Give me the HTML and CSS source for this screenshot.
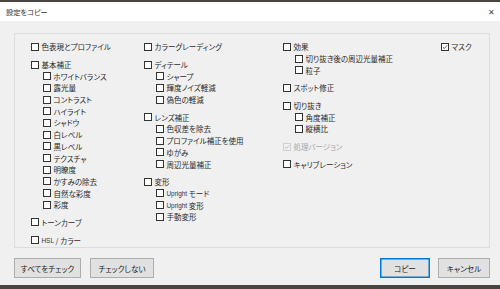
FILE: index.html
```html
<!DOCTYPE html>
<html lang="ja">
<head>
    <meta charset="UTF-8">
    <title>設定をコピー</title>
    <link rel="stylesheet" href="styles.css">
</head>
<body>
    <div class="dialog">
        <div class="titlebar">
            <span class="title">設定をコピー</span>
            <span class="close">&#x2715;</span>
        </div>

        <div class="content">
            <div class="group">
                <!-- Column 1 -->
                <div class="col col1">
                    <div class="set">
                        <label class="item"><span class="box"></span>色表現とプロファイル</label>
                    </div>
                    <div class="set">
                        <label class="item"><span class="box"></span>基本補正</label>
                        <label class="item sub"><span class="box"></span>ホワイトバランス</label>
                        <label class="item sub"><span class="box"></span>露光量</label>
                        <label class="item sub"><span class="box"></span>コントラスト</label>
                        <label class="item sub"><span class="box"></span>ハイライト</label>
                        <label class="item sub"><span class="box"></span>シャドウ</label>
                        <label class="item sub"><span class="box"></span>白レベル</label>
                        <label class="item sub"><span class="box"></span>黒レベル</label>
                        <label class="item sub"><span class="box"></span>テクスチャ</label>
                        <label class="item sub"><span class="box"></span>明瞭度</label>
                        <label class="item sub"><span class="box"></span>かすみの除去</label>
                        <label class="item sub"><span class="box"></span>自然な彩度</label>
                        <label class="item sub"><span class="box"></span>彩度</label>
                    </div>
                    <div class="set">
                        <label class="item"><span class="box"></span>トーンカーブ</label>
                    </div>
                    <div class="set">
                        <label class="item"><span class="box"></span><span class="latin">HSL</span>&nbsp;/ カラー</label>
                    </div>
                </div>

                <!-- Column 2 -->
                <div class="col col2">
                    <div class="set">
                        <label class="item"><span class="box"></span>カラーグレーディング</label>
                    </div>
                    <div class="set">
                        <label class="item"><span class="box"></span>ディテール</label>
                        <label class="item sub"><span class="box"></span>シャープ</label>
                        <label class="item sub"><span class="box"></span>輝度ノイズ軽減</label>
                        <label class="item sub"><span class="box"></span>偽色の軽減</label>
                    </div>
                    <div class="set">
                        <label class="item"><span class="box"></span>レンズ補正</label>
                        <label class="item sub"><span class="box"></span>色収差を除去</label>
                        <label class="item sub"><span class="box"></span>プロファイル補正を使用</label>
                        <label class="item sub"><span class="box"></span>ゆがみ</label>
                        <label class="item sub"><span class="box"></span>周辺光量補正</label>
                    </div>
                    <div class="set">
                        <label class="item"><span class="box"></span>変形</label>
                        <label class="item sub"><span class="box"></span><span class="latin">Upright</span>&nbsp;モード</label>
                        <label class="item sub"><span class="box"></span><span class="latin">Upright</span>&nbsp;変形</label>
                        <label class="item sub"><span class="box"></span>手動変形</label>
                    </div>
                </div>

                <!-- Column 3 -->
                <div class="col col3">
                    <div class="set">
                        <label class="item"><span class="box"></span>効果</label>
                        <label class="item sub"><span class="box"></span>切り抜き後の周辺光量補正</label>
                        <label class="item sub"><span class="box"></span>粒子</label>
                    </div>
                    <div class="set">
                        <label class="item"><span class="box"></span>スポット修正</label>
                    </div>
                    <div class="set">
                        <label class="item"><span class="box"></span>切り抜き</label>
                        <label class="item sub"><span class="box"></span>角度補正</label>
                        <label class="item sub"><span class="box"></span>縦横比</label>
                    </div>
                    <div class="set">
                        <label class="item disabled"><span class="box checked"><svg viewBox="0 0 7 7"><path d="M1 3.6 L2.8 5.3 L6 1.6" /></svg></span>処理バージョン</label>
                    </div>
                    <div class="set">
                        <label class="item"><span class="box"></span>キャリブレーション</label>
                    </div>
                </div>

                <!-- Column 4 -->
                <div class="col col4">
                    <div class="set">
                        <label class="item"><span class="box checked"><svg viewBox="0 0 7 7"><path d="M1 3.6 L2.8 5.3 L6 1.6" /></svg></span>マスク</label>
                    </div>
                </div>
            </div>

            <div class="buttons">
                <div class="left">
                    <span class="btn btn-wide">すべてをチェック</span>
                    <span class="btn">チェックしない</span>
                </div>
                <div class="right">
                    <span class="btn btn-default">コピー</span>
                    <span class="btn btn-small">キャンセル</span>
                </div>
            </div>
        </div>
    </div>
</body>
</html>
```

FILE: styles.css
```css
body {
    margin: 0;
    padding: 0;
    width: 500px;
    height: 289px;
    overflow: hidden;
    background: #4a4541;
    font-family: "Noto Sans CJK JP", "Noto Sans", sans-serif;
    font-feature-settings: "palt";
    color: #2a2a2a;
}

.dialog {
    margin-top: 2px;
    height: 283px;
    background: #f0f0f0;
}

/* Title bar */
.titlebar {
    height: 19px;
    background: #fff;
    display: flex;
    align-items: center;
    justify-content: space-between;
    padding: 0 6px;
    font-size: 7.2px;
    color: #333;
}

.close {
    font-size: 8px;
    color: #444;
    margin-right: -1px;
}

.content {
    padding: 12px 10px 0 14px;
}

/* Settings group */
.group {
    height: 206px;
    width: 458px;
    border: 1px solid #dcdcdc;
    padding: 7px 0 0 16px;
    display: flex;
    box-sizing: content-box;
}

.col {
    display: flex;
    flex-direction: column;
}

.col1 { width: 113px; }
.col2 { width: 139px; }
.col3 { width: 158px; }
.col4 { flex: 1; }

.set {
    display: flex;
    flex-direction: column;
}

.set + .set {
    margin-top: 6px;
}

.item {
    height: 11.7px;
    display: flex;
    align-items: center;
    font-size: 7.5px;
    white-space: nowrap;
}

.item.sub {
    padding-left: 12px;
}

.latin {
    font-family: "Liberation Sans", sans-serif;
    font-size: 6.4px;
    color: #2a3550;
}

.box {
    width: 6px;
    height: 6px;
    border: 1px solid #333;
    background: #fff;
    margin-right: 2.5px;
    flex-shrink: 0;
    display: flex;
}

.box svg {
    width: 6px;
    height: 6px;
}

.box svg path {
    fill: none;
    stroke: #333;
    stroke-width: 0.9;
}

.disabled {
    color: #a6a6a6;
}

.disabled .box {
    border-color: #cfcfcf;
    background: #f0f0f0;
}

.disabled .box svg path {
    stroke: #b4b4b4;
}

/* Bottom buttons */
.buttons {
    display: flex;
    justify-content: space-between;
    margin-top: 10px;
    width: 476px;
}

.left, .right {
    display: flex;
    gap: 9px;
}

.right {
    gap: 8px;
}

.btn {
    height: 18px;
    width: 62px;
    border: 1px solid #adadad;
    background: #e1e1e1;
    font-size: 7.6px;
    display: flex;
    align-items: center;
    justify-content: center;
    color: #222;
}

.btn-wide {
    width: 65px;
}

.btn-default {
    width: 48px;
    border-color: #0078d7;
    box-shadow: inset 0 0 0 0.5px #0078d7;
}

.btn-small {
    width: 50px;
}
```
